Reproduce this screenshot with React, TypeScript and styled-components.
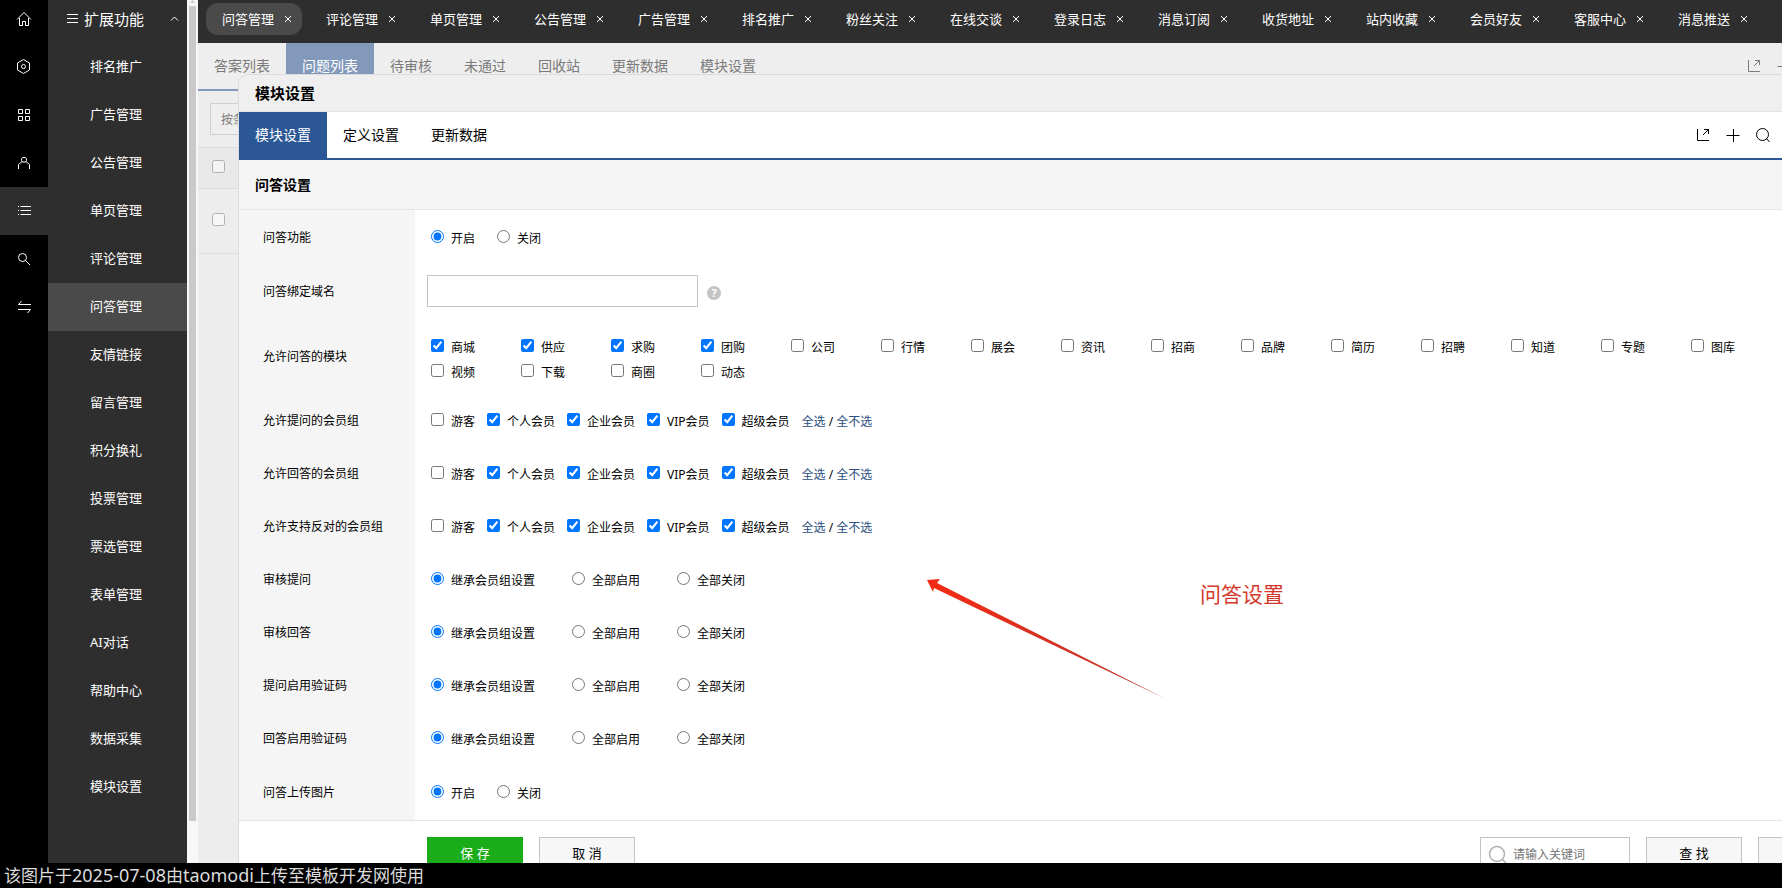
import React from "react";
import styled, { createGlobalStyle } from "styled-components";

const GlobalStyle = createGlobalStyle`
  * { box-sizing: border-box; }
  body {
    margin: 0;
    background: #000;
    font-family: "Noto Sans", "Noto Sans CJK SC", sans-serif;
    font-size: 12px;
    color: #000;
  }
  button, input { font: inherit; color: inherit; }
  button { padding: 0; border: 0; background: none; }
  ul { margin: 0; padding: 0; list-style: none; }
  a { text-decoration: none; color: inherit; }
  h1, h2 { margin: 0; font-size: inherit; }
`;

const Page = styled.div`
  display: flex;
  flex-direction: column;
  height: 100vh;
  overflow: hidden;
`;

const Workspace = styled.div`
  display: flex;
  flex: 1;
  min-height: 0;
  overflow: hidden;
`;

const Rail = styled.nav`
  display: flex;
  flex-direction: column;
  flex: none;
  width: 48px;
  background: #000;
`;

const RailButton = styled.button<{ $first?: boolean; $active?: boolean }>`
  display: flex;
  align-items: center;
  justify-content: center;
  height: ${(p) => (p.$first ? 43 : 48)}px;
  padding-bottom: ${(p) => (p.$first ? 5 : 0)}px;
  background: ${(p) => (p.$active ? "#2e2e2e" : "transparent")};
  color: #fff;
`;

const SideMenu = styled.aside`
  flex: none;
  width: 139px;
  background: #2e2e2e;
  color: #fff;
`;

const SideTitle = styled.div`
  display: flex;
  align-items: center;
  gap: 6px;
  height: 43px;
  padding: 0 8px 7px 19px;
  font-size: 15px;
`;

const Caret = styled.span`
  display: flex;
  margin-left: auto;
`;

const SideLink = styled.a<{ $active?: boolean }>`
  display: flex;
  align-items: center;
  height: 48px;
  padding: 0 0 3px 42px;
  font-size: 13px;
  background: ${(p) => (p.$active ? "#4a4a4a" : "transparent")};
`;

const ScrollTrack = styled.div`
  display: flex;
  flex-direction: column;
  gap: 1px;
  flex: none;
  width: 11px;
  padding: 0 2px 42px;
  background: #f7f7f7;
  color: #c9c9c9;
`;

const ScrollThumb = styled.div`
  flex: 1;
  background: #c9c9c9;
`;

const Main = styled.main`
  position: relative;
  flex: 1;
  min-width: 0;
  overflow: hidden;
  background: #ededed;
`;

const TopBar = styled.nav`
  display: flex;
  gap: 8px;
  height: 43px;
  padding: 3px 8px 8px;
  background: #2e2e2e;
`;

const TopTab = styled.div<{ $active?: boolean }>`
  display: flex;
  flex: none;
  align-items: center;
  justify-content: space-between;
  width: 96px;
  height: 32px;
  padding: 0 10px 2px 16px;
  border-radius: 12px;
  background: ${(p) => (p.$active ? "#4a4a4a" : "transparent")};
  color: #fff;
  font-size: 13px;
`;

const CloseButton = styled.button`
  display: flex;
  padding-top: 2px;
  color: #fff;
`;

const TabRow = styled.div<{ $dim?: boolean }>`
  display: flex;
  flex: none;
  height: 48px;
  border-bottom: 2px solid ${(p) => (p.$dim ? "#8299bb" : "#2b5797")};
  background: ${(p) => (p.$dim ? "#eeeeee" : "#fff")};
  color: ${(p) => (p.$dim ? "#7a7a7a" : "#000")};
  font-size: 14px;
`;

const Tab = styled.a<{ $fill?: string }>`
  display: flex;
  align-items: center;
  padding: 0 16px 2px;
  background: ${(p) => p.$fill ?? "transparent"};
  color: ${(p) => (p.$fill ? "#fff" : "inherit")};
`;

const Tools = styled.div<{ $overhang?: boolean }>`
  display: flex;
  align-items: center;
  gap: 14px;
  margin-left: auto;
  margin-right: ${(p) => (p.$overhang ? -10 : 11)}px;
`;

const ToolButton = styled.button`
  display: flex;
`;

const FilterBar = styled.div`
  display: flex;
  padding: 12px;
`;

const FilterInput = styled.input`
  width: 160px;
  height: 32px;
  padding: 0 10px;
  border: 1px solid #cfcfcf;
  background: #eeeeee;
  color: #7a7a7a;
`;

const ListRow = styled.div<{ $head?: boolean }>`
  display: flex;
  align-items: center;
  height: ${(p) => (p.$head ? 41 : 65)}px;
  padding: 0 0 3px 14px;
  border-top: 1px solid #dedede;
  background: ${(p) => (p.$head ? "#e9e9e9" : "transparent")};
`;

const ListEnd = styled.div`
  border-top: 1px solid #dedede;
`;

const Check = styled.input<{ $faded?: boolean }>`
  width: 13px;
  height: 13px;
  margin: 0;
  opacity: ${(p) => (p.$faded ? 0.5 : 1)};
`;

const Dialog = styled.section`
  position: absolute;
  top: 74px;
  right: 0;
  bottom: 0;
  left: 40px;
  display: flex;
  flex-direction: column;
  border: 1px solid #dcdcdc;
  border-width: 1px 0 0 1px;
  border-radius: 10px 0 0 0;
  background: #fff;
  overflow: hidden;
`;

const DialogTitle = styled.h1`
  flex: none;
  height: 37px;
  padding-left: 16px;
  border-bottom: 1px solid #e2e2e2;
  background: #efefef;
  font-size: 15px;
  font-weight: 700;
  line-height: 36px;
`;

const SectionTitle = styled.h2`
  flex: none;
  height: 50px;
  padding-left: 16px;
  border-bottom: 1px solid #e5e5e5;
  background: #f5f5f5;
  font-size: 14px;
  font-weight: 700;
  line-height: 49px;
`;

const Form = styled.form`
  display: flex;
  flex: none;
  flex-direction: column;
`;

const Field = styled.div<{ $height?: number }>`
  display: flex;
  min-height: ${(p) => p.$height ?? 53}px;
`;

const FieldName = styled.div`
  display: flex;
  flex: none;
  align-items: center;
  width: 176px;
  padding-left: 24px;
  background: #f5f5f5;
`;

const FieldBody = styled.div<{ $gap?: number }>`
  display: flex;
  flex: 1;
  align-items: center;
  gap: ${(p) => p.$gap ?? 12}px;
  padding: 3px 0 0 16px;
`;

const Option = styled.label`
  display: flex;
  align-items: center;
  gap: 7px;
  line-height: 25px;
  white-space: nowrap;

  input {
    margin: 0 0 4px;
  }
`;

const ModuleGrid = styled.div`
  display: grid;
  flex: 1;
  grid-template-columns: repeat(auto-fill, 90px);
  padding-top: 4px;
`;

const DomainBody = styled.div`
  display: flex;
  align-items: center;
  gap: 9px;
  padding-left: 12px;
`;

const DomainInput = styled.input`
  width: 271px;
  height: 32px;
  padding: 0 8px;
  border: 1px solid #c4c4c4;
`;

const Help = styled.button`
  width: 14px;
  height: 14px;
  margin-top: 4px;
  border-radius: 50%;
  background: #c4c4c4;
  color: #fff;
  font-size: 11px;
  font-weight: 700;
  line-height: 14px;
`;

const PickLinks = styled.span`
  color: #000;

  a {
    color: #2b4f80;
  }
`;

const Footer = styled.footer`
  display: flex;
  flex: none;
  gap: 16px;
  padding: 16px 0 16px 188px;
  border-top: 1px solid #e5e5e5;
`;

const FooterTools = styled.div`
  display: flex;
  gap: 16px;
  margin-left: auto;
  margin-right: -72px;
`;

const Button = styled.button<{ $primary?: boolean }>`
  flex: none;
  width: 96px;
  height: 32px;
  border: 1px solid ${(p) => (p.$primary ? "#1aad19" : "#c4c4c4")};
  background: ${(p) => (p.$primary ? "#1aad19" : "#f7f7f7")};
  color: ${(p) => (p.$primary ? "#fff" : "#000")};
  font-size: 13px;
  line-height: 28px;
`;

const SearchBox = styled.label`
  display: flex;
  flex: none;
  align-items: center;
  gap: 6px;
  width: 150px;
  height: 34px;
  padding-left: 7px;
  border: 1px solid #c4c4c4;
  color: #b0b0b0;
`;

const SearchInput = styled.input`
  flex: 1;
  min-width: 0;
  padding: 0;
  border: 0;
  outline: 0;
  background: none;

  &::placeholder {
    color: #757575;
    opacity: 1;
  }
`;

const Arrow = styled.svg`
  position: absolute;
  top: 578px;
  left: 728px;
`;

const Note = styled.p`
  position: absolute;
  top: 579px;
  left: 1002px;
  margin: 0;
  color: #d43a2b;
  font-size: 21px;
  line-height: 30px;
`;

const Caption = styled.footer`
  flex: none;
  height: 25px;
  padding-left: 4px;
  background: #000;
  color: #dcdcdc;
  font-size: 17px;
  line-height: 24px;
`;

const Latin = styled.span`
  font-size: 18px;
`;

const Glyph = ({ size = 16, children }: { size?: number; children: React.ReactNode }) => (
  <svg width={size} height={size} viewBox={`0 0 ${size} ${size}`} fill="none" stroke="currentColor" aria-hidden="true">
    {children}
  </svg>
);

const railIcons = [
  { name: "首页", art: <path d="M1 8.500L8 1.500l7 7M3.500 7v7.500h3v-4h3v4h3V7" /> },
  { name: "设置", art: <><path d="M7.500 .5l6 3.500v7l-6 3.500-6-3.500V4z" /><circle cx="7.500" cy="7.500" r="2" /></> },
  { name: "应用", art: <path d="M2.500 2.500h4v4h-4zM9.500 2.500h4v4h-4zM2.500 9.500h4v4h-4zM9.500 9.500h4v4h-4z" /> },
  { name: "会员", art: <path d="M6.500 2.500h3l1 1.500v1.500l-1 1.500h-3l-1-1.500V4zM6.500 7h-1L2.500 9.500V14M9.500 7h1l3 2.500V14" /> },
  { name: "列表", art: <path d="M4.500 3.500H15M4.500 7.500H15M4.500 11.500H15M2 3.500h1M2 7.500h1M2 11.500h1" /> },
  { name: "搜索", art: <><circle cx="6.500" cy="6.500" r="4" /><path d="M9.500 9.500L14 14" /></> },
  { name: "切换", art: <path d="M5.500 2L2.500 5.500H15M2 10.500h12.500L11.500 14" /> },
];

const menu = ["排名推广", "广告管理", "公告管理", "单页管理", "评论管理", "问答管理", "友情链接", "留言管理", "积分换礼", "投票管理", "票选管理", "表单管理", "AI对话", "帮助中心", "数据采集", "模块设置"];
const topTabs = ["问答管理", "评论管理", "单页管理", "公告管理", "广告管理", "排名推广", "粉丝关注", "在线交谈", "登录日志", "消息订阅", "收货地址", "站内收藏", "会员好友", "客服中心", "消息推送"];
const listTabs = ["答案列表", "问题列表", "待审核", "未通过", "回收站", "更新数据", "模块设置"];
const dialogTabs = ["模块设置", "定义设置", "更新数据"];
const modules = ["商城", "供应", "求购", "团购", "公司", "行情", "展会", "资讯", "招商", "品牌", "简历", "招聘", "知道", "专题", "图库", "视频", "下载", "商圈", "动态"];
const groups = ["游客", "个人会员", "企业会员", "VIP会员", "超级会员"];
const groupFields = ["允许提问的会员组", "允许回答的会员组", "允许支持反对的会员组"];
const auditFields = ["审核提问", "审核回答", "提问启用验证码", "回答启用验证码"];
const auditChoices = ["继承会员组设置", "全部启用", "全部关闭"];

const OpenIcon = () => (
  <Glyph>
    <path d="M2.500 2v11.500H14M8 8l5.500-5.500M9 2.500h4.500V7" />
  </Glyph>
);
const PlusIcon = () => (
  <Glyph>
    <path d="M1.500 8.500h13M8.500 2v13" />
  </Glyph>
);
const SearchIcon = () => (
  <Glyph>
    <circle cx="7.500" cy="7.500" r="6" />
    <path d="M11.500 11.500l3 3.500" />
  </Glyph>
);

function Radios({ name, choices, gap, height }: { name: string; choices: string[]; gap: number; height?: number }) {
  return (
    <Field role="radiogroup" aria-label={name} $height={height}>
      <FieldName>{name}</FieldName>
      <FieldBody $gap={gap}>
        {choices.map((choice, i) => (
          <Option key={choice}>
            <Check type="radio" name={name} defaultChecked={i === 0} />
            {choice}
          </Option>
        ))}
      </FieldBody>
    </Field>
  );
}

function Groups({ name }: { name: string }) {
  return (
    <Field role="group" aria-label={name}>
      <FieldName>{name}</FieldName>
      <FieldBody>
        {groups.map((group, i) => (
          <Option key={group}>
            <Check type="checkbox" defaultChecked={i > 0} />
            {group}
          </Option>
        ))}
        <PickLinks>
          <a href="#all">全选</a> / <a href="#none">全不选</a>
        </PickLinks>
      </FieldBody>
    </Field>
  );
}

export default function App() {
  return (
    <Page>
      <GlobalStyle />
      <Workspace>
        <Rail>
          {railIcons.map((icon, i) => (
            <RailButton key={icon.name} aria-label={icon.name} $first={i === 0} $active={i === 4}>
              <Glyph>{icon.art}</Glyph>
            </RailButton>
          ))}
        </Rail>
        <SideMenu>
          <SideTitle>
            <Glyph size={11}>
              <path d="M0 1.500h11M0 5.500h11M0 9.500h11" />
            </Glyph>
            扩展功能
            <Caret>
              <Glyph size={9}>
                <path d="M1 6.500L4.500 3 8 6.500" />
              </Glyph>
            </Caret>
          </SideTitle>
          <ul>
            {menu.map((item) => (
              <li key={item}>
                <SideLink href="#menu" $active={item === "问答管理"}>{item}</SideLink>
              </li>
            ))}
          </ul>
        </SideMenu>
        <ScrollTrack>
          <svg width="7" height="5" viewBox="0 0 7 5" aria-hidden="true">
            <path d="M1 3L3.500 0 6 3z" fill="currentColor" />
          </svg>
          <ScrollThumb />
        </ScrollTrack>
        <Main>
          <TopBar>
            {topTabs.map((tab, i) => (
              <TopTab key={tab} $active={i === 0}>
                <a href="#tab">{tab}</a>
                <CloseButton aria-label={`关闭${tab}`}>
                  <Glyph size={8}>
                    <path d="M1 1l6 6M7 1L1 7" />
                  </Glyph>
                </CloseButton>
              </TopTab>
            ))}
          </TopBar>
          <TabRow $dim>
            {listTabs.map((tab, i) => (
              <Tab key={tab} href="#list" $fill={i === 1 ? "#8299bb" : undefined}>{tab}</Tab>
            ))}
            <Tools $overhang>
              <ToolButton aria-label="新窗口"><OpenIcon /></ToolButton>
              <ToolButton aria-label="添加"><PlusIcon /></ToolButton>
            </Tools>
          </TabRow>
          <FilterBar>
            <FilterInput aria-label="条件" defaultValue="按条件" />
          </FilterBar>
          <ListRow $head><Check type="checkbox" aria-label="全部" $faded /></ListRow>
          <ListRow><Check type="checkbox" aria-label="问题" $faded /></ListRow>
          <ListEnd />

          <Dialog role="dialog" aria-label="模块设置">
            <DialogTitle>模块设置</DialogTitle>
            <TabRow>
              {dialogTabs.map((tab, i) => (
                <Tab key={tab} href="#setting" $fill={i === 0 ? "#2b5797" : undefined}>{tab}</Tab>
              ))}
              <Tools>
                <ToolButton aria-label="新窗口"><OpenIcon /></ToolButton>
                <ToolButton aria-label="添加"><PlusIcon /></ToolButton>
                <ToolButton aria-label="搜索"><SearchIcon /></ToolButton>
              </Tools>
            </TabRow>
            <SectionTitle>问答设置</SectionTitle>
            <Form>
              <Radios name="问答功能" choices={["开启", "关闭"]} gap={22} />
              <Field $height={56}>
                <FieldName as="label" htmlFor="domain">问答绑定域名</FieldName>
                <DomainBody>
                  <DomainInput id="domain" type="text" />
                  <Help type="button" aria-label="帮助">?</Help>
                </DomainBody>
              </Field>
              <Field $height={74} role="group" aria-label="允许问答的模块">
                <FieldName>允许问答的模块</FieldName>
                <FieldBody>
                  <ModuleGrid>
                    {modules.map((item, i) => (
                      <Option key={item}>
                        <Check type="checkbox" defaultChecked={i < 4} />
                        {item}
                      </Option>
                    ))}
                  </ModuleGrid>
                </FieldBody>
              </Field>
              {groupFields.map((name) => <Groups key={name} name={name} />)}
              {auditFields.map((name) => <Radios key={name} name={name} choices={auditChoices} gap={37} />)}
              <Radios name="问答上传图片" choices={["开启", "关闭"]} gap={22} height={56} />
            </Form>
            <Footer>
              <Button $primary>保 存</Button>
              <Button>取 消</Button>
              <FooterTools>
                <SearchBox>
                  <svg width="19" height="19" viewBox="0 0 19 19" fill="none" stroke="currentColor" strokeWidth="1.500" aria-hidden="true">
                    <circle cx="9" cy="9" r="7.500" />
                    <path d="M14 14l4 4" />
                  </svg>
                  <SearchInput type="text" aria-label="关键词" placeholder="请输入关键词" />
                </SearchBox>
                <Button>查 找</Button>
                <Button aria-label="更多" />
              </FooterTools>
            </Footer>
          </Dialog>

          <Arrow width="240" height="122" viewBox="0 0 240 122" aria-hidden="true">
            <defs>
              <linearGradient id="shaft" x1="0" y1="0" x2="1" y2="1">
                <stop offset="0" stopColor="#f52a14" />
                <stop offset="1" stopColor="#b8392f" />
              </linearGradient>
            </defs>
            <path d="M1 2L14 1L11 5L238 120L8 10L7 14Z" fill="url(#shaft)" />
          </Arrow>
          <Note>问答设置</Note>
        </Main>
      </Workspace>
      <Caption>
        该图片于<Latin>2025-07-08</Latin>由<Latin>taomodi</Latin>上传至模板开发网使用
      </Caption>
    </Page>
  );
}
